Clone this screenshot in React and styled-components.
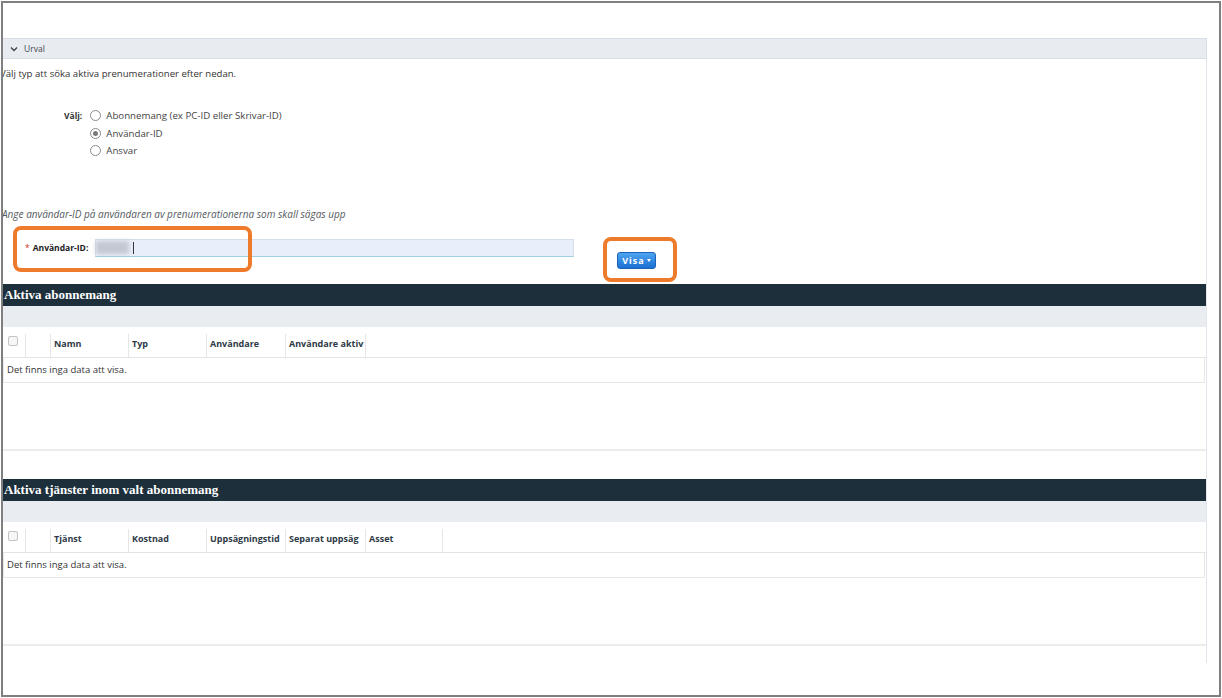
import React from 'react';
import styled, { createGlobalStyle } from 'styled-components';

const GlobalStyle = createGlobalStyle`
  html, body {
    margin: 0;
    padding: 0;
    background: #ffffff;
  }
  body {
    font-family: "Open Sans", "Liberation Sans", Arial, sans-serif;
    color: #333333;
  }
`;

const Frame = styled.div`
  margin: 1px;
  height: 696px;
  border: 2px solid #7f7f7f;
  box-sizing: border-box;
  background: #ffffff;
  overflow: hidden;
  padding-top: 35px;
`;

const Panel = styled.div`
  margin-right: 12px;
  display: flex;
  flex-direction: column;
`;

const PanelHeader = styled.div`
  height: 21px;
  box-sizing: border-box;
  background: #e8ebf0;
  border: 1px solid #d8dde6;
  border-left: none;
  display: flex;
  align-items: center;
  padding-left: 7px;
  gap: 6px;
  font-size: 8.5px;
  color: #444a52;
`;

const PanelBody = styled.div`
  height: 604px;
  border-right: 1px solid #e2e6ec;
  display: flex;
  flex-direction: column;
`;

const Intro = styled.div`
  margin: 9px 0 0 -3px;
  font-size: 9.6px;
  line-height: 12px;
  color: #333333;
`;

const ChoiceGroup = styled.div`
  margin-top: 27px;
  padding-left: 61px;
  display: flex;
  align-items: flex-start;
  gap: 8px;
`;

const ChoiceLabel = styled.span`
  font-size: 8.5px;
  font-weight: 700;
  line-height: 17px;
  color: #333333;
`;

const RadioList = styled.div`
  display: flex;
  flex-direction: column;
`;

const RadioRow = styled.label`
  display: flex;
  align-items: center;
  gap: 5px;
  height: 17.5px;
  font-size: 9.7px;
  color: #444444;
`;

const RadioDot = styled.span`
  width: 9px;
  height: 9px;
  border-radius: 50%;
  border: 1px solid #8a8a8a;
  background: #ffffff;
  display: flex;
  align-items: center;
  justify-content: center;
  &::after {
    content: '';
    width: 5px;
    height: 5px;
    border-radius: 50%;
    background: ${p => (p.$checked ? '#7a7a7a' : 'transparent')};
  }
`;

const Hint = styled.div`
  margin: 48px 0 0 -1px;
  font-size: 10px;
  line-height: 12px;
  font-style: italic;
  color: #555b63;
`;

const FormRow = styled.div`
  position: relative;
  margin-top: 19px;
  padding-left: 22px;
  display: flex;
  align-items: flex-start;
`;

const FieldLabel = styled.label`
  width: 70px;
  height: 18px;
  display: flex;
  align-items: center;
  font-size: 8.5px;
  font-weight: 700;
  color: #222222;
  & b {
    color: #d0342c;
    font-weight: 400;
    margin-right: 3px;
  }
`;

const Input = styled.div`
  width: 479px;
  height: 18px;
  box-sizing: border-box;
  background: #e9effa;
  border: 1px solid #d6deec;
  border-bottom-color: #9fcfe0;
  display: flex;
  align-items: center;
`;

const Blurred = styled.span`
  width: 33px;
  height: 13px;
  background: #c4c8d0;
  filter: blur(2px);
`;

const Caret = styled.span`
  width: 1px;
  height: 12px;
  margin-left: 4px;
  background: #333333;
`;

const ButtonWrap = styled.div`
  position: relative;
  margin: 13px 0 0 43px;
`;

const VisaButton = styled.button`
  width: 39px;
  height: 17px;
  padding: 0;
  border: 1px solid #1b62b8;
  border-radius: 3px;
  background: linear-gradient(#4ea4f2, #1b6fd2);
  color: #ffffff;
  font-family: "Open Sans", "Liberation Sans", Arial, sans-serif;
  font-size: 9px;
  font-weight: 700;
  letter-spacing: 1px;
  display: flex;
  align-items: center;
  justify-content: center;
  gap: 2px;
  & i {
    width: 0;
    height: 0;
    border-left: 2.5px solid transparent;
    border-right: 2.5px solid transparent;
    border-top: 3px solid #ffffff;
  }
`;

const Highlight = styled.span`
  position: absolute;
  top: ${p => p.$top}px;
  left: ${p => p.$left}px;
  width: ${p => p.$width}px;
  height: ${p => p.$height}px;
  box-sizing: border-box;
  border: 4px solid #ee7b2c;
  border-radius: 8px;
  pointer-events: none;
`;

const Section = styled.section`
  margin-top: ${p => p.$gap}px;
  display: flex;
  flex-direction: column;
`;

const TitleBar = styled.div`
  height: 22px;
  background: #1d2f3b;
  display: flex;
  align-items: center;
  padding-left: 1px;
  font-family: "Liberation Serif", "Times New Roman", serif;
  font-size: 13px;
  font-weight: 700;
  color: #ffffff;
`;

const Toolbar = styled.div`
  height: 21px;
  background: #e9ecf1;
`;

const HeaderRow = styled.div`
  height: 31px;
  box-sizing: border-box;
  padding-top: 7px;
  border-bottom: 1px solid #e4e4e4;
  display: flex;
`;

const HeadCell = styled.div`
  width: ${p => p.$width}px;
  flex-shrink: 0;
  box-sizing: border-box;
  border-right: 1px solid #e6e6e6;
  padding-left: 3px;
  display: flex;
  align-items: center;
  overflow: hidden;
  white-space: nowrap;
  font-size: 9px;
  font-weight: 700;
  color: #2e3a46;
  padding-bottom: 3px;
`;

const CheckBox = styled.span`
  width: 10px;
  height: 10px;
  box-sizing: border-box;
  margin: 0 0 6px 2px;
  border: 1px solid #c4c4c4;
  border-radius: 2px;
  background: #f6f6f6;
`;

const DataRow = styled.div`
  height: 25px;
  box-sizing: border-box;
  border: 1px solid #e8e8e8;
  border-top: none;
  margin-right: 1px;
  display: flex;
  align-items: center;
  padding-left: 3px;
  font-size: 9.5px;
  color: #333333;
`;

const Empty = styled.div`
  height: ${p => p.$height}px;
  border-bottom: 2px solid #ececec;
`;

const Chevron = () => (
  <svg width="8" height="6" viewBox="0 0 8 6">
    <path d="M1 1.5 L4 4.5 L7 1.5" fill="none" stroke="#3a4048" strokeWidth="1.3" />
  </svg>
);

const choices = [
  { label: 'Abonnemang (ex PC-ID eller Skrivar-ID)', checked: false },
  { label: 'Användar-ID', checked: true },
  { label: 'Ansvar', checked: false }
];

const subscriptionColumns = [
  { label: 'Namn', width: 78 },
  { label: 'Typ', width: 78 },
  { label: 'Användare', width: 79 },
  { label: 'Användare aktiv', width: 80 }
];

const serviceColumns = [
  { label: 'Tjänst', width: 78 },
  { label: 'Kostnad', width: 78 },
  { label: 'Uppsägningstid', width: 79 },
  { label: 'Separat uppsäg', width: 80 },
  { label: 'Asset', width: 77 }
];

const DataSection = ({ title, columns, gap, emptyHeight }) => (
  <Section $gap={gap}>
    <TitleBar>{title}</TitleBar>
    <Toolbar />
    <HeaderRow>
      <HeadCell $width={23}>
        <CheckBox />
      </HeadCell>
      <HeadCell $width={25} />
      {columns.map(col => (
        <HeadCell key={col.label} $width={col.width}>
          {col.label}
        </HeadCell>
      ))}
    </HeaderRow>
    <DataRow>Det finns inga data att visa.</DataRow>
    <Empty $height={emptyHeight} />
  </Section>
);

const App = () => (
  <>
    <GlobalStyle />
    <Frame>
      <Panel>
        <PanelHeader>
          <Chevron />
          <span>Urval</span>
        </PanelHeader>
        <PanelBody>
          <Intro>Välj typ att söka aktiva prenumerationer efter nedan.</Intro>
          <ChoiceGroup>
            <ChoiceLabel>Välj:</ChoiceLabel>
            <RadioList>
              {choices.map(choice => (
                <RadioRow key={choice.label}>
                  <RadioDot $checked={choice.checked} />
                  {choice.label}
                </RadioRow>
              ))}
            </RadioList>
          </ChoiceGroup>
          <Hint>Ange användar-ID på användaren av prenumerationerna som skall sägas upp</Hint>
          <FormRow>
            <Highlight $top={-13} $left={10} $width={239} $height={46} />
            <FieldLabel>
              <b>*</b>Användar-ID:
            </FieldLabel>
            <Input>
              <Blurred />
              <Caret />
            </Input>
            <ButtonWrap>
              <Highlight $top={-15} $left={-14} $width={74} $height={45} />
              <VisaButton>
                Visa <i />
              </VisaButton>
            </ButtonWrap>
          </FormRow>
          <DataSection title="Aktiva abonnemang" columns={subscriptionColumns} gap={15} emptyHeight={66} />
          <DataSection title="Aktiva tjänster inom valt abonnemang" columns={serviceColumns} gap={28} emptyHeight={66} />
        </PanelBody>
      </Panel>
    </Frame>
  </>
);

export default App;
